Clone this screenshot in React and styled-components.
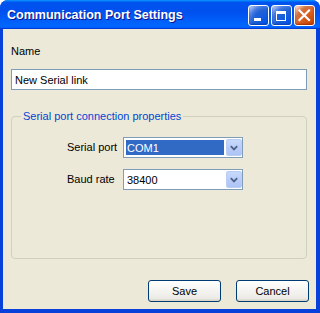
import React from "react";
import styled, { createGlobalStyle } from "styled-components";

const GlobalStyle = createGlobalStyle`
  html, body {
    margin: 0;
    padding: 0;
    background: #ffffff;
  }
  * {
    box-sizing: border-box;
  }
`;

const Window = styled.div`
  width: 320px;
  height: 313px;
  display: flex;
  flex-direction: column;
  border-radius: 8px 8px 0 0;
  overflow: hidden;
  background: #0841d9;
  font-family: "Liberation Sans", Arial, sans-serif;
  font-size: 11px;
  color: #000;
`;

const TitleBar = styled.div`
  height: 29px;
  flex: none;
  display: flex;
  align-items: center;
  justify-content: space-between;
  padding: 0 5px 0 7px;
  background: linear-gradient(
    180deg,
    #0997ff,
    #0053ee 8%,
    #0050ee 40%,
    #06f 88%,
    #06f 93%,
    #005bff 95%,
    #003dd7 96%,
    #003dd7
  );
`;

const Title = styled.span`
  color: #fff;
  font-weight: bold;
  font-size: 12.5px;
  text-shadow: 1px 1px #0f1089;
  margin-top: 1px;
`;

const Controls = styled.div`
  display: flex;
  gap: 2px;
  margin-top: 2px;
`;

const ControlButton = styled.div`
  width: 21px;
  height: 21px;
  border: 1px solid #fff;
  border-radius: 3px;
  display: flex;
  align-items: center;
  justify-content: center;
  background: ${(p) =>
    p.$close
      ? "radial-gradient(circle at 90% 90%, #cc4600 0%, #dc6527 55%, #cd7546 70%, #ffccb2 90%, #fff 100%)"
      : "radial-gradient(circle at 90% 90%, #0054e9 0%, #2263d5 55%, #4479e4 70%, #a3bbec 90%, #fff 100%)"};
  box-shadow: inset 0 -1px 2px ${(p) => (p.$close ? "#a12c00" : "#0a3bb0")};
`;

const Body = styled.div`
  flex: 1;
  display: flex;
  flex-direction: column;
  background: #ece9d8;
  border-style: solid;
  border-color: #0841d9;
  border-width: 0 4px 4px 3px;
  padding: 16px 7px 7px 8px;
`;

const Label = styled.div`
  line-height: 13px;
  height: 13px;
`;

const TextInput = styled.input`
  margin-top: 11px;
  margin-right: 2px;
  height: 21px;
  border: 1px solid #7f9db9;
  background: #fff;
  padding: 0 3px;
  font-family: inherit;
  font-size: 11px;
  color: #000;
  outline: none;
`;

const Group = styled.fieldset`
  flex: 1;
  margin: 20px 2px 0 0;
  padding: 0;
  border: 1px solid #d0d0bf;
  border-radius: 4px;
  min-width: 0;
`;

const Legend = styled.legend`
  color: #0046d5;
  line-height: 13px;
  margin-left: 9px;
  padding: 0 2px;
`;

const Rows = styled.div`
  display: grid;
  grid-template-columns: 56px 120px;
  row-gap: 11px;
  align-items: center;
  margin: 14px 0 0 55px;
`;

const Combo = styled.div`
  height: 21px;
  border: 1px solid #7f9db9;
  background: #fff;
  display: flex;
  align-items: stretch;
  padding: 1px 0 1px 2px;
`;

const ComboValue = styled.div`
  flex: 1;
  display: flex;
  align-items: center;
  margin: 1px 2px 1px 0;
  padding-left: 1px;
  background: ${(p) => (p.$selected ? "#316ac5" : "transparent")};
  color: ${(p) => (p.$selected ? "#fff" : "#000")};
`;

const ArrowButton = styled.div`
  width: 16px;
  border: 1px solid #bacdf5;
  border-radius: 2px;
  background: linear-gradient(180deg, #c6d8fc 0%, #b7cbf8 60%, #aec4f5 100%);
  display: flex;
  align-items: center;
  justify-content: center;
`;

const ButtonRow = styled.div`
  display: flex;
  justify-content: flex-end;
  gap: 15px;
  margin-top: 21px;
`;

const Button = styled.button`
  width: 73px;
  height: 22px;
  border: 1px solid #003c74;
  border-radius: 3px;
  background: linear-gradient(180deg, #fff, #ecebe6 86%, #d6d0c5);
  font-family: inherit;
  font-size: 11px;
  color: #000;
  padding: 0;
`;

const Chevron = () => (
  <svg width="8" height="6" viewBox="0 0 8 6">
    <path d="M0.8 1.2 L4 4.4 L7.2 1.2" fill="none" stroke="#4d6185" strokeWidth="1.8" />
  </svg>
);

const ComboBox = ({ value, selected }) => (
  <Combo>
    <ComboValue $selected={selected}>{value}</ComboValue>
    <ArrowButton>
      <Chevron />
    </ArrowButton>
  </Combo>
);

const App = () => {
  return (
    <>
      <GlobalStyle />
      <Window>
        <TitleBar>
          <Title>Communication Port Settings</Title>
          <Controls>
            <ControlButton>
              <svg width="19" height="19" viewBox="0 0 19 19">
                <rect x="5" y="12" width="7" height="3" fill="#fff" />
              </svg>
            </ControlButton>
            <ControlButton>
              <svg width="19" height="19" viewBox="0 0 19 19">
                <rect x="4.5" y="5.5" width="9" height="9" fill="none" stroke="#fff" strokeWidth="1" />
                <rect x="4" y="5" width="10" height="3" fill="#fff" />
              </svg>
            </ControlButton>
            <ControlButton $close>
              <svg width="19" height="19" viewBox="0 0 19 19">
                <path d="M4.5 4.5 L14 14 M14 4.5 L4.5 14" stroke="#fff" strokeWidth="2.2" strokeLinecap="square" />
              </svg>
            </ControlButton>
          </Controls>
        </TitleBar>
        <Body>
          <Label>Name</Label>
          <TextInput defaultValue="New Serial link" />
          <Group>
            <Legend>Serial port connection properties</Legend>
            <Rows>
              <Label>Serial port</Label>
              <ComboBox value="COM1" selected />
              <Label>Baud rate</Label>
              <ComboBox value="38400" />
            </Rows>
          </Group>
          <ButtonRow>
            <Button>Save</Button>
            <Button>Cancel</Button>
          </ButtonRow>
        </Body>
      </Window>
    </>
  );
};

export default App;
